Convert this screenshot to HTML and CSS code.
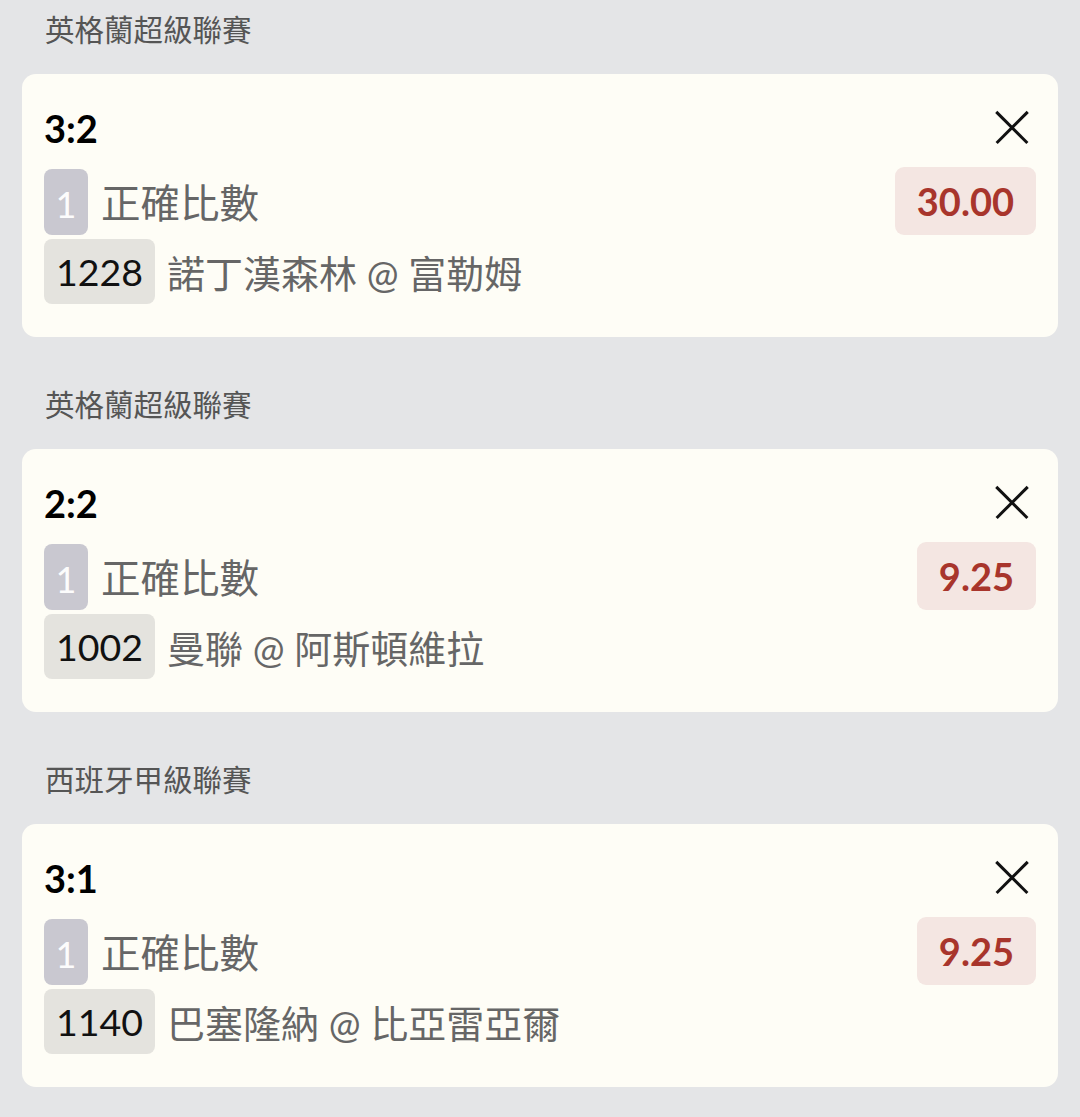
FILE: index.html
```html
<!DOCTYPE html>
<html lang="zh-Hant">

<head>
  <meta charset="UTF-8" />
  <meta name="viewport" content="width=device-width, initial-scale=1.0" />
  <title>投注單</title>
  <link rel="stylesheet" href="styles.css">
</head>

<body>
  <div class="slip">
    <div class="group">
      <div class="league">英格蘭超級聯賽</div>
      <div class="card">
        <div class="card-head">
          <span class="score">3:2</span>
          <span class="close"></span>
        </div>
        <div class="row">
          <span class="leg">1</span>
          <span class="pool">正確比數</span>
          <span class="odds">30.00</span>
        </div>
        <div class="row">
          <span class="match-no">1228</span>
          <span class="teams">諾丁漢森林 @ 富勒姆</span>
        </div>
      </div>
    </div>

    <div class="group">
      <div class="league">英格蘭超級聯賽</div>
      <div class="card">
        <div class="card-head">
          <span class="score">2:2</span>
          <span class="close"></span>
        </div>
        <div class="row">
          <span class="leg">1</span>
          <span class="pool">正確比數</span>
          <span class="odds">9.25</span>
        </div>
        <div class="row">
          <span class="match-no">1002</span>
          <span class="teams">曼聯 @ 阿斯頓維拉</span>
        </div>
      </div>
    </div>

    <div class="group">
      <div class="league">西班牙甲級聯賽</div>
      <div class="card">
        <div class="card-head">
          <span class="score">3:1</span>
          <span class="close"></span>
        </div>
        <div class="row">
          <span class="leg">1</span>
          <span class="pool">正確比數</span>
          <span class="odds">9.25</span>
        </div>
        <div class="row">
          <span class="match-no">1140</span>
          <span class="teams">巴塞隆納 @ 比亞雷亞爾</span>
        </div>
      </div>
    </div>
  </div>
</body>

</html>
```

FILE: styles.css
```css
* {
  margin: 0;
  padding: 0;
  box-sizing: border-box;
}

body {
  background-color: #e4e5e7;
  font-family: Lato, "Noto Sans CJK TC", sans-serif;
  color: #111;
}

.slip {
  padding: 0 22px;
}

.group {
  padding-top: 12px;
  margin-bottom: 38px;
}

.league {
  height: 36px;
  line-height: 36px;
  padding-left: 23px;
  font-size: 29.5px;
  color: #555;
  margin-bottom: 26px;
}

/**
 * card
 */
.card {
  background-color: #fefdf6;
  border-radius: 14px;
  padding: 24px 22px 33px 22px;
}

.card-head {
  display: flex;
  justify-content: space-between;
  align-items: center;
  height: 60px;
  margin-bottom: 8px;
}

.score {
  font-size: 38px;
  font-weight: 700;
  color: #000;
}

.close {
  position: relative;
  width: 34px;
  height: 34px;
  margin-right: 7px;
  margin-top: -3px;
}

.close::before,
.close::after {
  content: "";
  position: absolute;
  left: -5px;
  top: 50%;
  width: 44px;
  height: 2.5px;
  margin-top: -1px;
  background-color: #111;
}

.close::before {
  transform: rotateZ(45deg);
}

.close::after {
  transform: rotateZ(-45deg);
}

.row {
  display: flex;
  align-items: center;
  height: 69px;
}

.row + .row {
  margin-top: 4px;
  height: 65px;
}

.leg {
  width: 44px;
  height: 66px;
  line-height: 70px;
  border-radius: 8px;
  background-color: #c9c8d0;
  color: #fcfcfc;
  text-align: center;
  font-size: 36px;
  margin-top: 3px;
}

.pool {
  margin-left: 13px;
  font-size: 39.5px;
  color: #666;
  flex: 1;
}

.odds {
  height: 68px;
  line-height: 68px;
  padding: 0 22px;
  border-radius: 9px;
  background-color: #f4e6e2;
  color: #a8352c;
  font-size: 38px;
  font-weight: 700;
}

.match-no {
  height: 65px;
  line-height: 65px;
  padding: 0 12px;
  border-radius: 8px;
  background-color: #e4e3de;
  color: #111;
  font-size: 37.5px;
}

.teams {
  margin-left: 12px;
  font-size: 38px;
  color: #666;
}
```
